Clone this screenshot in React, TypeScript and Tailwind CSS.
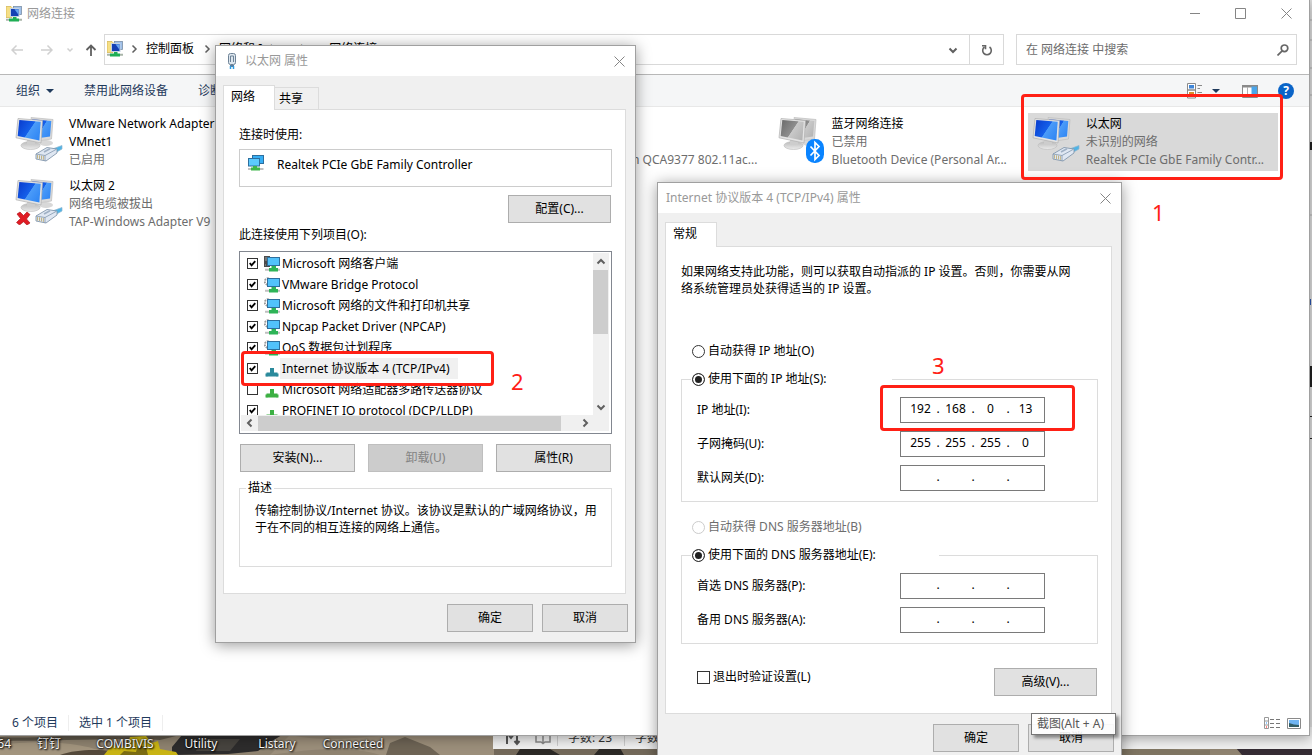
import React, { useState } from 'react';

/* ---------- icons ---------- */

const Gradients = () => (
  <svg className="absolute w-0 h-0" aria-hidden="true">
    <defs>
      <linearGradient id="screenBlue" x1="0" y1="0.2" x2="1" y2="0.8">
        <stop offset="0" stopColor="#0a3fd0" />
        <stop offset="0.5" stopColor="#1560ea" />
        <stop offset="0.52" stopColor="#4b9bf8" />
        <stop offset="1" stopColor="#2f86f4" />
      </linearGradient>
      <linearGradient id="screenGray" x1="0" y1="0.2" x2="1" y2="0.8">
        <stop offset="0" stopColor="#6f6f6f" />
        <stop offset="0.5" stopColor="#8e8e8e" />
        <stop offset="0.52" stopColor="#c9c9c9" />
        <stop offset="1" stopColor="#b4b4b4" />
      </linearGradient>
      <linearGradient id="stand" x1="0" y1="0" x2="0" y2="1">
        <stop offset="0" stopColor="#b9b9b9" />
        <stop offset="1" stopColor="#ececec" />
      </linearGradient>
    </defs>
  </svg>
);

interface AdapterIconProps {
  kind: 'wired' | 'unplugged' | 'bluetooth';
}

const AdapterIcon: React.FC<AdapterIconProps> = ({ kind }) => {
  const screen = kind === 'bluetooth' ? 'url(#screenGray)' : 'url(#screenBlue)';
  return (
    <svg className="w-12 h-12 shrink-0" viewBox="0 0 48 48">
      <ellipse cx="31" cy="28" rx="7" ry="3" fill="#d8d8d8" />
      <path d="M16 2.500 38 4.500 36.500 24 20 26.500Z" fill="#d9d9d9" stroke="#bdbdbd" strokeWidth="0.7" />
      <path d="M17 4.200 36.300 6 35 21.500 21 23.500Z" fill={screen} />
      <ellipse cx="15.500" cy="30.500" rx="9.500" ry="4" fill="url(#stand)" stroke="#c0c0c0" strokeWidth="0.7" />
      <path d="M12 24 20 25.500 20 30 12 30Z" fill="#cdcdcd" />
      <path d="M3 3.500 27.500 5.500 26 28 1 22.800Z" fill="#e4e4e4" stroke="#b0b0b0" strokeWidth="0.7" />
      <path d="M4.300 4.900 25.700 6.800 24.400 25.500 2.700 21Z" fill={screen} />
      {kind !== 'bluetooth' && (
        <g strokeLinejoin="round">
          <path d="M36 34.500 47 30.500 47 34 39 38.500Z" fill="#4fb4e6" stroke="#8fb6cf" strokeWidth="0.7" />
          <path d="M21 39 32 32.500 42 34 42 38 31 46 21 44Z" fill="#dfe7f2" stroke="#8397ad" strokeWidth="0.9" />
          <path d="M21 39 30 40.500 30 46M30 40.500 41 34.500" fill="none" stroke="#8397ad" strokeWidth="0.8" />
          <path d="M22.500 40v3.600M24.500 40.300v3.700M26.500 40.600v3.800M28.400 41v3.900" stroke="#b9a76b" strokeWidth="0.8" />
          <path d="M29 37 35 33.800" stroke="#9fb0c4" strokeWidth="1.600" />
        </g>
      )}
      {kind === 'unplugged' && (
        <path d="M2 37 5 35 8.500 38.500 12 35 15 37.500 11.500 42 15 46 12 48 8.500 44.800 4.500 48 1.500 45.500 5.500 41.500Z" fill="#e01b24" stroke="#a80d14" strokeWidth="0.6" />
      )}
      {kind === 'bluetooth' && (
        <g>
          <rect x="28" y="24" width="18" height="24" rx="8.500" fill="#0a84ff" />
          <path d="M32.500 31.500 41 40.500 37 44.500V27.500L41 31.500 32.500 40.500" fill="none" stroke="#fff" strokeWidth="1.700" />
        </g>
      )}
    </svg>
  );
};

const FolderNetIcon = () => (
  <svg className="w-4 h-4 shrink-0" viewBox="0 0 16 16">
    <path d="M0 0.500h5l1 1v10H0z" fill="#f5df86" stroke="#c9a63a" strokeWidth="0.6" />
    <rect x="7.500" y="0.500" width="8" height="8" fill="#9fc0ea" stroke="#7b8fa6" strokeWidth="0.8" />
    <rect x="4.500" y="2.500" width="8.500" height="8" fill="#1540b4" stroke="#c4d2e2" />
    <path d="M8.500 3.200h4v5.500z" fill="#67a5f2" />
    <path d="M7 11h3.500v1.500H13V15.500H3V12.500h4z" fill="#1fae54" />
    <path d="M0 12.800h3v2H0zM13 12.800h3v2h-3z" fill="#a9b5a9" />
  </svg>
);

const NicIcon = () => (
  <svg className="w-4 h-4 shrink-0" viewBox="0 0 16 16">
    <rect x="4.500" y="0.500" width="11" height="8" fill="#36aef5" stroke="#2e6f9e" />
    <rect x="0.500" y="3.500" width="11" height="7.500" fill="#5ccafe" stroke="#2e6f9e" />
    <path d="M5 11h4v1.500h3V15.500H3v-3h2z" fill="#3eb64a" />
    <path d="M0 14h3M12 14h3.500" stroke="#c0c0c0" strokeWidth="2" />
  </svg>
);

const ClientIcon = () => (
  <svg className="w-4 h-4 shrink-0" viewBox="0 0 16 16">
    <rect x="0" y="0" width="6" height="11" fill="#4c4c4c" />
    <path d="M1 2h3M1 4h3M1 9h1" stroke="#b5b5b5" strokeWidth="0.8" />
    <rect x="3.500" y="1.500" width="12" height="8" fill="#52c2fb" stroke="#2e6f9e" />
    <path d="M7.500 10H12v2h2v3.500H5V12h2.500z" fill="#2eb457" />
    <path d="M1 13.800h4M14 13.800h2" stroke="#c0c0c0" strokeWidth="2" />
  </svg>
);

const ServiceIcon = () => (
  <svg className="w-4 h-4 shrink-0" viewBox="0 0 16 16">
    <circle cx="4" cy="4.500" r="3.200" fill="#fff" stroke="#9a9a9a" strokeWidth="2" strokeDasharray="1.800 0.900" />
    <rect x="3.500" y="1.500" width="12" height="8" fill="#52c2fb" stroke="#2e6f9e" />
    <path d="M7.500 10H12v2h2v3.500H5V12h2.500z" fill="#2eb457" />
    <path d="M1 13.800h4M14 13.800h2" stroke="#c0c0c0" strokeWidth="2" />
  </svg>
);

const ProtocolIcon: React.FC<{ color: string }> = ({ color }) => (
  <svg className="w-4 h-4 shrink-0" viewBox="0 0 16 16">
    <path d="M6 7h4v4.500h3.500v4H2.500v-4H6z" fill={color} />
    <path d="M1.500 12.500h2v3h-2zM12.500 12.500h2v3h-2z" fill={color} />
  </svg>
);

const PlugIcon = () => (
  <svg className="w-4 h-4 shrink-0" viewBox="0 0 16 16">
    <rect x="4.500" y="0.500" width="7" height="11" rx="2" fill="#dde6ee" stroke="#6d8296" />
    <path d="M6.500 3v6M9.500 3v6M6.500 3h3" stroke="#6d8296" fill="none" />
    <path d="M6 12h4v2H6z" fill="#5a7ea0" />
    <path d="M6.500 13v3M9.500 13v3" stroke="#2f9be0" strokeWidth="1.500" />
  </svg>
);

const CloseIcon = () => (
  <svg className="w-[11px] h-[11px]" viewBox="0 0 11 11" stroke="#858585" fill="none">
    <path d="M0.500 0.500l10 10M10.500 0.500l-10 10" />
  </svg>
);

const Chevron: React.FC<{ d: string; color?: string; width?: number }> = ({ d, color = '#606060', width = 2 }) => (
  <svg className="w-[10px] h-[10px]" viewBox="0 0 10 10" stroke={color} strokeWidth={width} fill="none">
    <path d={d} />
  </svg>
);

const UP = 'M1.5 6.500 5 3l3.500 3.500';
const DOWN = 'M1.5 3.500 5 7l3.500-3.500';
const LEFT = 'M6.500 1.5 3 5l3.500 3.500';
const RIGHT = 'M3.500 1.5 7 5l-3.500 3.500';

const Triangle = () => (
  <svg className="w-2 h-1" viewBox="0 0 8 4"><path d="M0 0h8L4 4z" fill="#1e395b" /></svg>
);

/* ---------- form controls ---------- */

interface PushButtonProps {
  children: React.ReactNode;
  className?: string;
  disabled?: boolean;
}

const PushButton: React.FC<PushButtonProps> = ({ children, className = '', disabled }) => (
  <button
    disabled={disabled}
    className={`h-7 bg-[#e1e1e1] border border-[#adadad] text-center disabled:bg-[#cccccc] disabled:border-[#bfbfbf] disabled:text-[#838383] ${className}`}
  >
    {children}
  </button>
);

const CheckBox: React.FC<{ id: string; checked: boolean; onToggle: () => void; size: string }> = ({ id, checked, onToggle, size }) => (
  <span className={`relative shrink-0 ${size}`}>
    <input
      id={id}
      type="checkbox"
      checked={checked}
      onChange={onToggle}
      className="block w-full h-full appearance-none bg-white border border-[#333333]"
    />
    {checked && (
      <svg className="absolute inset-0 w-full h-full pointer-events-none" viewBox="0 0 12 12">
        <path d="M3 5.500 5 8l4-4.500" fill="none" stroke="#000" strokeWidth="2" />
      </svg>
    )}
  </span>
);

interface RadioProps {
  name: string;
  label: string;
  defaultChecked?: boolean;
  disabled?: boolean;
}

const Radio: React.FC<RadioProps> = ({ name, label, defaultChecked, disabled }) => (
  <label className={`flex items-center gap-[3px] ${disabled ? 'text-[#6d6d6d]' : ''}`}>
    <input
      type="radio"
      name={name}
      defaultChecked={defaultChecked}
      disabled={disabled}
      className="w-[13px] h-[13px] shrink-0 appearance-none rounded-full border border-[#333333] bg-white checked:bg-[#222222] checked:shadow-[inset_0_0_0_2px_#ffffff] disabled:border-[#cccccc]"
    />
    {label}
  </label>
);

const IpField: React.FC<{ label: string; value: string[] }> = ({ label, value }) => (
  <div className="flex items-center">
    <span className="w-[203px]">{label}</span>
    <div className="flex items-center h-[26px] w-[145px] pl-1 pb-0.5 bg-white border border-[#7a7a7a]">
      {value.map((part, i) => (
        <React.Fragment key={i}>
          {i > 0 && <span className="w-1 text-center">.</span>}
          <input
            aria-label={`${label} ${i + 1}`}
            defaultValue={part}
            maxLength={3}
            className="w-[31px] text-center bg-transparent outline-none"
          />
        </React.Fragment>
      ))}
    </div>
  </div>
);

/* ---------- explorer window ---------- */

interface Tile {
  name: string;
  status: string;
  device?: string;
  kind: AdapterIconProps['kind'];
  selected?: boolean;
}

const TILES: Tile[] = [
  { name: 'VMware Network Adapter\nVMnet1', status: '已启用', kind: 'wired' },
  { name: 'VMware Network Adapter\nVMnet8', status: '已启用', kind: 'wired' },
  { name: 'WLAN', status: '已禁用', device: 'Qualcomm QCA9377 802.11ac...', kind: 'wired' },
  { name: '蓝牙网络连接', status: '已禁用', device: 'Bluetooth Device (Personal Ar...', kind: 'bluetooth' },
  { name: '以太网', status: '未识别的网络', device: 'Realtek PCIe GbE Family Contr...', kind: 'wired', selected: true },
  { name: '以太网 2', status: '网络电缆被拔出', device: 'TAP-Windows Adapter V9', kind: 'unplugged' },
];

const Explorer = () => (
  <div className="absolute left-0 top-0 right-[2px] bottom-[19px] flex flex-col bg-white border-r border-b border-[#a0a0a0] shadow-[0_2px_12px_rgba(0,0,0,0.35)]">
    <div className="flex items-center justify-between h-[27px] pl-1.5 pr-[17px]">
      <div className="flex items-center gap-[5px] text-[#999999]">
        <FolderNetIcon />
        网络连接
      </div>
      <div className="flex items-center gap-[35px]">
        <button aria-label="最小化"><svg className="w-[10px] h-[11px]" viewBox="0 0 10 11"><path d="M0 5.500h10" stroke="#858585" /></svg></button>
        <button aria-label="最大化"><svg className="w-[11px] h-[11px]" viewBox="0 0 11 11"><path d="M0.500 0.500h10v10h-10z" fill="none" stroke="#858585" /></svg></button>
        <button aria-label="关闭"><CloseIcon /></button>
      </div>
    </div>

    <div className="flex items-center gap-3 pt-[7px] pb-[9px] pr-3 pl-[11px] border-b border-[#b8b8b8]">
      <div className="flex items-center">
        <button aria-label="后退">
          <svg className="w-3 h-3" viewBox="0 0 12 12" fill="none" stroke="#d0d0d0" strokeWidth="1.500"><path d="M12 6H1M5.500 1.500 1 6l4.500 4.500" /></svg>
        </button>
        <button aria-label="前进" className="ml-[18px]">
          <svg className="w-3 h-3" viewBox="0 0 12 12" fill="none" stroke="#d0d0d0" strokeWidth="1.500"><path d="M0 6h11M6.500 1.500 11 6l-4.500 4.500" /></svg>
        </button>
        <button aria-label="最近的位置" className="ml-3">
          <svg className="w-[10px] h-[10px]" viewBox="0 0 10 10" fill="none" stroke="#d0d0d0" strokeWidth="1.500"><path d="M2.500 3.500 5 6l2.500-2.500" /></svg>
        </button>
        <button aria-label="向上" className="ml-[10px]">
          <svg className="w-3 h-3" viewBox="0 0 12 12" fill="none" stroke="#606060" strokeWidth="1.800"><path d="M6 12V1.500M1.500 6 6 1.500 10.500 6" /></svg>
        </button>
      </div>
      <div className="flex flex-1 -ml-[5px] h-[31px] border border-[#d9d9d9]">
        <div className="flex flex-1 items-center pl-0.5 pb-0.5">
          <FolderNetIcon />
          <span className="ml-[6px]"><Chevron d={RIGHT} width={1.5} /></span>
          <span className="ml-[7px]">控制面板</span>
          <span className="ml-[8px]"><Chevron d={RIGHT} width={1.5} /></span>
          <span className="ml-[7px]">网络和 Internet</span>
          <span className="ml-[7px]"><Chevron d={RIGHT} width={1.5} /></span>
          <span className="ml-2">网络连接</span>
        </div>
        <button aria-label="上一个位置" className="px-[11px]"><Chevron d={DOWN} /></button>
        <button aria-label="刷新" className="flex items-center justify-center w-[34px] border-l border-[#d9d9d9]">
          <svg className="w-3 h-3" viewBox="0 0 12 12" fill="none" stroke="#666" strokeWidth="1.600">
            <path d="M3.500 3A4.300 4.300 0 1 0 8.500 3" /><path d="M1 1.800h3.500v3.400" />
          </svg>
        </button>
      </div>
      <label className="flex items-center w-[281px] h-[31px] pl-[9px] pr-[7px] border border-[#d9d9d9]">
        <input aria-label="搜索" placeholder="在 网络连接 中搜索" className="flex-1 min-w-0 outline-none placeholder:text-[#6d6d6d]" />
        <svg className="w-3 h-3" viewBox="0 0 12 12" fill="none" stroke="#666" strokeWidth="1.700">
          <circle cx="7.500" cy="4.300" r="3.300" /><path d="M5.200 6.800 0.500 11.500" />
        </svg>
      </label>
    </div>

    <div className="flex items-center justify-between h-8 pl-4 pr-[15px] bg-[#f5f6f7] border-b border-[#e8e8e8] text-[#1e395b]">
      <div className="flex items-center gap-[30px] whitespace-nowrap">
        <button className="flex items-center gap-[6px]">组织 <Triangle /></button>
        <button>禁用此网络设备</button>
        <button>诊断此连接</button>
      </div>
      <div className="flex items-center">
        <button aria-label="更改视图" className="flex items-center gap-[10px]">
          <svg className="w-4 h-4" viewBox="0 0 16 16">
            <path d="M1.500 0.500h8v6.500h-8zM1.500 7h8v8h-8z" fill="#fff" stroke="#8a8a8a" />
            <path d="M3 2h5v3.500H3z" fill="#3f86d8" /><path d="M3 9h5v3.500H3z" fill="#d98c2b" />
            <path d="M11.500 2.500H16M11.500 5.500H14M11.500 9.500H16M11.500 12.500H14" stroke="#8a8a8a" />
          </svg>
          <Triangle />
        </button>
        <button aria-label="预览窗格" className="ml-[22px]">
          <svg className="w-4 h-4" viewBox="0 0 16 16">
            <path d="M0.500 2.500h15v12h-15z" fill="#fff" stroke="#8a8a8a" /><path d="M0 2h16v2.500H0z" fill="#8a8a8a" />
            <path d="M5.500 4v10" stroke="#b0b0b0" /><path d="M9.500 3.500H15V14H9.500z" fill="#4aa5ea" />
          </svg>
        </button>
        <button aria-label="帮助" className="ml-5 w-4 h-4 rounded-full bg-[#0a64c8] text-white font-bold leading-4">?</button>
      </div>
    </div>

    <div className="grid grid-cols-5 content-start gap-1 flex-1 pt-1.5 pl-[11px] pr-[31px]">
      {TILES.map((tile) => (
        <div
          key={tile.name}
          className={`flex gap-1.5 h-[58px] py-0.5 pl-1 ${tile.selected ? 'bg-[#d9d9d9]' : ''}`}
        >
          <AdapterIcon kind={tile.kind} />
          <div className="min-w-0 leading-[18px] text-[#6d6d6d]">
            <div className="text-black whitespace-pre">{tile.name}</div>
            <div className="whitespace-nowrap">{tile.status}</div>
            {tile.device && <div className="whitespace-nowrap">{tile.device}</div>}
          </div>
        </div>
      ))}
    </div>

    <div className="flex items-center justify-between h-6 pl-3 pr-2 text-[#1e395b]">
      <div className="flex items-center">
        <span className="pr-[10px] border-r border-[#eeeeee]">6 个项目</span>
        <span className="px-[10px] border-r border-[#eeeeee]">选中 1 个项目</span>
      </div>
      <div className="flex items-center gap-[7px]">
        <button aria-label="详细信息">
          <svg className="w-4 h-3" viewBox="0 0 16 12">
            <path d="M0.500 0.500h4v11h-4zM0.500 4h4M0.500 8h4" fill="none" stroke="#999" />
            <path d="M6 2.500h4M12 2.500h4M6 6.500h4M12 6.500h4M6 10.500h4M12 10.500h4" stroke="#777" />
            <path d="M2 5.500h1v1H2z" fill="#1e90ff" /><path d="M2 9.500h1v1H2z" fill="red" />
          </svg>
        </button>
        <button aria-label="大图标">
          <svg className="w-[14px] h-[11px]" viewBox="0 0 14 11">
            <path d="M0.500 0.500h13v10h-13z" fill="#fff" stroke="#8a8a8a" />
            <path d="M2 2h10v7H2z" fill="#6fb4f2" /><path d="M2 5l5 1.500 5 .5v2H2z" fill="#335e66" />
          </svg>
        </button>
      </div>
    </div>
  </div>
);

/* ---------- dialogs ---------- */

interface DialogProps {
  title: string;
  icon?: React.ReactNode;
  tabs: string[];
  place: string;
  children: React.ReactNode;
}

const Dialog: React.FC<DialogProps> = ({ title, icon, tabs, place, children }) => (
  <div className={`absolute bg-[#f0f0f0] border border-[#a0a0a0] shadow-[0_2px_14px_rgba(0,0,0,0.4)] ${place}`}>
    <div className="flex items-center justify-between h-[30px] pl-2 pr-[10px] bg-white text-[#999999]">
      <div className="flex items-center gap-[5px]">{icon}{title}</div>
      <button aria-label="关闭"><CloseIcon /></button>
    </div>
    <div className="pt-[9px] pl-[7px] pr-[9px]">
      <div className="flex items-end h-[25px]">
        {tabs.map((tab, i) => (
          <button
            key={tab}
            className={
              i === 0
                ? 'relative z-10 w-[52px] h-[25px] pl-[7px] pb-0.5 text-left bg-white border border-b-0 border-[#dcdcdc]'
                : 'w-11 h-[23px] pl-1 text-left border border-l-0 border-[#dcdcdc]'
            }
          >
            {tab}
          </button>
        ))}
      </div>
      <div className="-mt-px pt-4 pl-[15px] pr-[13px] bg-white border border-[#dcdcdc]">{children}</div>
    </div>
    <div className="flex justify-end gap-[9px] py-[10px] pr-[7px]">
      <PushButton className="w-[86px]">确定</PushButton>
      <PushButton className="w-[86px]">取消</PushButton>
    </div>
  </div>
);

const COMPONENTS = [
  { name: 'Microsoft 网络客户端', icon: <ClientIcon />, on: true },
  { name: 'VMware Bridge Protocol', icon: <ServiceIcon />, on: true },
  { name: 'Microsoft 网络的文件和打印机共享', icon: <ServiceIcon />, on: true },
  { name: 'Npcap Packet Driver (NPCAP)', icon: <ServiceIcon />, on: true },
  { name: 'QoS 数据包计划程序', icon: <ServiceIcon />, on: true },
  { name: 'Internet 协议版本 4 (TCP/IPv4)', icon: <ProtocolIcon color="#2b8a9c" />, on: true },
  { name: 'Microsoft 网络适配器多路传送器协议', icon: <ProtocolIcon color="#3cb043" />, on: false },
  { name: 'PROFINET IO protocol (DCP/LLDP)', icon: <ProtocolIcon color="#3cb043" />, on: true },
];

const EthernetDialog = () => {
  const [enabled, setEnabled] = useState(COMPONENTS.map((c) => c.on));
  const toggle = (i: number) => setEnabled(enabled.map((v, n) => (n === i ? !v : v)));

  return (
    <Dialog title="以太网 属性" icon={<PlugIcon />} tabs={['网络', '共享']} place="left-[215px] top-[45px] w-[421px]">
      <div className="pt-px">连接时使用:</div>
      <div className="flex gap-3 h-[38px] mt-1.5 pl-2 pt-[5px] border border-[#cccccc]">
        <NicIcon />
        <span className="pt-0.5 pl-px">Realtek PCIe GbE Family Controller</span>
      </div>
      <div className="flex justify-end mt-2 pr-px">
        <PushButton className="w-[103px]">配置(C)...</PushButton>
      </div>
      <div className="mt-1">此连接使用下列项目(O):</div>

      <div className="flex flex-col h-[183px] mt-2 pr-0.5 pb-px border border-[#828790]">
        <div className="flex h-[163px]">
          <ul className="flex-1 pt-px pl-[7px] overflow-hidden">
            {COMPONENTS.map((c, i) => (
              <li key={c.name} className="flex items-center h-[21px]">
                <CheckBox id={`component-${i}`} checked={enabled[i]} onToggle={() => toggle(i)} size="w-[11px] h-[11px]" />
                <span className="ml-[6px]">{c.icon}</span>
                <label
                  htmlFor={`component-${i}`}
                  className={`h-[21px] px-0.5 leading-[21px] whitespace-nowrap ${i === 5 ? 'pr-2 bg-[#f0f0f0]' : ''}`}
                >
                  {c.name}
                </label>
              </li>
            ))}
          </ul>
          <div className="flex flex-col justify-between w-4 mt-px bg-[#f0f0f0]">
            <div>
              <button aria-label="向上滚动" className="flex items-center justify-center w-4 h-[17px]"><Chevron d={UP} /></button>
              <div className="w-[15px] h-16 bg-[#cdcdcd]" />
            </div>
            <button aria-label="向下滚动" className="flex items-center justify-center w-4 h-[17px]"><Chevron d={DOWN} /></button>
          </div>
        </div>
        <div className="flex items-center h-4 ml-px bg-[#f0f0f0]">
          <button aria-label="向左滚动" className="flex items-center justify-center w-[17px] h-4"><Chevron d={LEFT} /></button>
          <div className="w-[303px] h-[15px] bg-[#cdcdcd]" />
          <button aria-label="向右滚动" className="flex items-center justify-center w-[17px] h-4 ml-[15px]"><Chevron d={RIGHT} /></button>
        </div>
      </div>

      <div className="flex justify-between mt-[10px] px-px">
        <PushButton className="w-[115px]">安装(N)...</PushButton>
        <PushButton className="w-[115px]" disabled>卸载(U)</PushButton>
        <PushButton className="w-[115px]">属性(R)</PushButton>
      </div>

      <fieldset className="h-[87px] mt-2 mb-[26px] border border-[#dcdcdc]">
        <legend className="ml-1.5 px-0.5">描述</legend>
        <p className="pt-1.5 pl-[15px] pr-3 leading-[17px]">
          传输控制协议/Internet 协议。该协议是默认的广域网络协议，用于在不同的相互连接的网络上通信。
        </p>
      </fieldset>
    </Dialog>
  );
};

const Ipv4Dialog = () => {
  const [validate, setValidate] = useState(false);

  return (
    <Dialog title="Internet 协议版本 4 (TCP/IPv4) 属性" tabs={['常规']} place="left-[657px] top-[182px] w-[465px]">
      <p className="leading-[17px] pr-5">
        如果网络支持此功能，则可以获取自动指派的 IP 设置。否则，你需要从网络系统管理员处获得适当的 IP 设置。
      </p>
      <div className="mt-[46px] pl-[11px]">
        <Radio name="ip" label="自动获得 IP 地址(O)" />
      </div>
      <fieldset className="mt-3 border border-[#dcdcdc]">
        <legend className="ml-[9px] w-[201px] pl-px">
          <Radio name="ip" label="使用下面的 IP 地址(S):" defaultChecked />
        </legend>
        <div className="flex flex-col gap-2 py-[10px] pl-[15px]">
          <IpField label="IP 地址(I):" value={['192', '168', '0', '13']} />
          <IpField label="子网掩码(U):" value={['255', '255', '255', '0']} />
          <IpField label="默认网关(D):" value={['', '', '', '']} />
        </div>
      </fieldset>

      <div className="mt-[17px] pl-[11px]">
        <Radio name="dns" label="自动获得 DNS 服务器地址(B)" disabled />
      </div>
      <fieldset className="mt-3 border border-[#dcdcdc]">
        <legend className="ml-[9px] w-[248px] pl-px">
          <Radio name="dns" label="使用下面的 DNS 服务器地址(E):" defaultChecked />
        </legend>
        <div className="flex flex-col gap-2 py-[10px] pl-[15px]">
          <IpField label="首选 DNS 服务器(P):" value={['', '', '', '']} />
          <IpField label="备用 DNS 服务器(A):" value={['', '', '', '']} />
        </div>
      </fieldset>

      <div className="flex justify-between mt-6 mb-[17px] pl-4 pr-px">
        <div className="flex items-center gap-[3px] h-[18px]">
          <CheckBox id="validate" checked={validate} onToggle={() => setValidate(!validate)} size="w-[13px] h-[13px]" />
          <label htmlFor="validate">退出时验证设置(L)</label>
        </div>
        <PushButton className="w-[103px]">高级(V)...</PushButton>
      </div>
    </Dialog>
  );
};

/* ---------- desktop ---------- */

const Wallpaper = () => (
  <svg className="absolute left-0 bottom-0 w-full h-5" viewBox="0 0 1312 20" preserveAspectRatio="none">
    <rect width="1312" height="20" fill="#8f8370" />
    <path d="M0 10C40 4 90 8 110 20H0z" fill="#a3957e" />
    <path d="M0 2C30 4 60 0 100 0H180L160 5C120 3 60 6 0 6z" fill="#5d5548" />
    <path d="M60 20C80 13 110 14 130 20z" fill="#54493a" />
    <path d="M172 12 182 0h100l-10 6 -14 10 -30 3 -56 1z" fill="#2d2c2c" />
    <path d="M200 4h40l-10 12h-34z" fill="#47443f" />
    <path d="M104 20 112 10 126 12 130 2 146 1 152 8 158 6 160 14 176 17 178 20z" fill="#c9b414" />
    <path d="M120 20l4-4 12 1 2-7 8 2 2 8z" fill="#7b6c12" />
    <path d="M290 0C330 8 360 2 390 0h104v20H380C350 10 310 14 270 20z" fill="#9c8f7b" />
    <path d="M390 8 405 2 430 12 440 20H386z" fill="#6e6455" />
    <path d="M494 0h166v20H494z" fill="#73695a" />
    <path d="M520 14h30l10 6h-44zM600 13h20l4 7h-30z" fill="#2c2926" />
    <path d="M1120 14c30-2 60 2 90 1v5h-90z" fill="#7f7562" />
    <path d="M1236 13h76v7h-70z" fill="#352c34" />
  </svg>
);

const DesktopLabels = () => (
  <div className="absolute left-0 bottom-[3px] flex text-white text-center [text-shadow:1px_1px_2px_#000,0_0_2px_#000]">
    <span className="flex justify-end w-[11px]">64</span>
    {['钉钉', 'COMBIVIS', 'Utility', 'Listary', 'Connected'].map((label) => (
      <span key={label} className="w-[76px]">{label}</span>
    ))}
  </div>
);

// word processor window, only its right edge and status bar stick out from behind the explorer
const DocumentWindow = () => (
  <div className="absolute left-[493px] right-0 top-0 bottom-[6px] flex flex-col justify-end bg-[#e0e0e0]">
    <svg className="absolute right-0 top-0 w-0.5 h-[450px]" viewBox="0 0 2 450">
      <path d="M0 20h2M0 40h2M0 68h2M0 95h2M0 215h2" stroke="#b0b0b0" />
      <path d="M0 142h2v8H0zM0 366h2v21H0zM0 416h2v1H0zM0 438h2v1H0z" fill="#222" />
      <path d="M0 299h1v6H0z" fill="#2a55b0" />
    </svg>
    <div className="flex items-center h-[22px] pl-3 bg-[#f0f0f0] text-[#333333]">
      <svg className="w-4 h-4" viewBox="0 0 16 16" fill="none" stroke="#555" strokeWidth="2">
        <path d="M2 14V3l4 5 4-5M12 4v9M9.500 11l2.500 3 2.500-3" />
      </svg>
      <svg className="w-4 h-4 ml-[14px]" viewBox="0 0 16 16" fill="none" stroke="#888" strokeWidth="1.500">
        <path d="M1 2h5l2 1.500L10 2h5v10h-5l-2 1.500L6 12H1zM8 3v10" />
      </svg>
      <span className="w-[67px] ml-1.5 pl-[10px] border-l border-[#cccccc]">字数: 23</span>
      <span className="pl-[10px] border-l border-[#cccccc]">字数</span>
    </div>
  </div>
);

const App = () => (
  <div className="relative h-screen overflow-hidden bg-[#8f8370] text-xs leading-4 text-black font-['Noto_Sans','Noto_Sans_CJK_SC',sans-serif]">
    <Gradients />
    <Wallpaper />
    <DesktopLabels />
    <DocumentWindow />
    <Explorer />
    <EthernetDialog />
    <Ipv4Dialog />

    <div className="absolute left-[1031px] top-[713px] w-[85px] h-[22px] px-[5px] leading-5 whitespace-nowrap bg-white/90 border border-[#767676] text-[#575757] shadow-[3px_3px_3px_rgba(0,0,0,0.4)]">
      截图(Alt + A)
    </div>

    {/* red step markers */}
    <div className="absolute left-[1021px] top-[94px] w-[262px] h-[86px] border-3 border-[#ff2015] rounded-sm pointer-events-none" />
    <div className="absolute left-[241px] top-[351px] w-[253px] h-[35px] border-3 border-[#ff2015] rounded-sm pointer-events-none" />
    <div className="absolute left-[880px] top-[385px] w-[195px] h-[46px] border-3 border-[#ff2015] rounded-sm pointer-events-none" />
    <span className="absolute left-[1152px] top-[200px] text-[22px] leading-6 text-[#ff2015]">1</span>
    <span className="absolute left-[511px] top-[369px] text-[22px] leading-6 text-[#ff2015]">2</span>
    <span className="absolute left-[932px] top-[353px] text-[22px] leading-6 text-[#ff2015]">3</span>
  </div>
);

export default App;
